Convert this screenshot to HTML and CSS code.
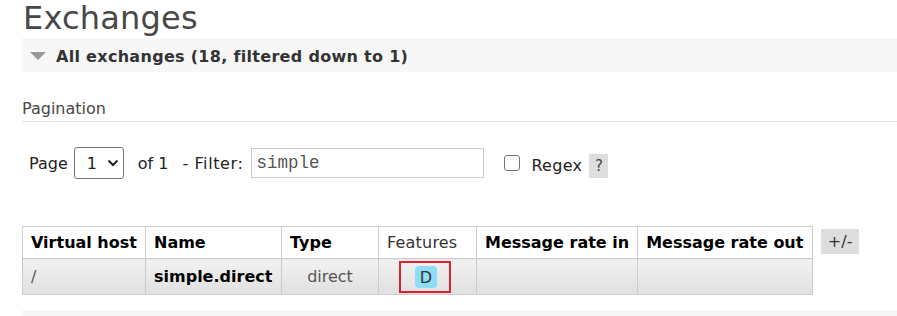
FILE: index.html
```html
<!DOCTYPE html>
<html>
<head>
<meta charset="utf-8">
<link rel="stylesheet" href="styles.css">
</head>
<body>
<div class="page">
  <h1 class="title">Exchanges</h1>
  <div class="section">
    <div class="section-head"><span class="tri"></span><span class="section-title">All exchanges (18, filtered down to 1)</span></div>
    <div class="section-body">
      <h3 class="sub">Pagination</h3>
      <div class="pager">
        <span class="lbl">Page</span>
        <span class="select"><span class="sel-val">1</span><svg class="chev" width="12" height="8" viewBox="0 0 12 8"><path d="M1.5 1.5 L6 6 L10.5 1.5" fill="none" stroke="#222" stroke-width="2"/></svg></span>
        <span class="lbl of">of 1</span>
        <span class="lbl filter">- Filter:</span>
        <span class="input">simple</span>
        <span class="check"></span>
        <span class="lbl regex">Regex</span>
        <span class="help">?</span>
      </div>
      <div class="table-wrap">
        <table class="list">
          <thead>
            <tr>
              <th class="c-vh">Virtual host</th>
              <th class="c-name">Name</th>
              <th class="c-type">Type</th>
              <th class="c-feat plain">Features</th>
              <th class="c-in">Message rate in</th>
              <th class="c-out">Message rate out</th>
            </tr>
          </thead>
          <tbody>
            <tr>
              <td class="vh">/</td>
              <td class="name">simple.direct</td>
              <td class="type">direct</td>
              <td class="feat"><span class="mark"><span class="badge">D</span></span></td>
              <td></td>
              <td></td>
            </tr>
          </tbody>
        </table>
        <span class="plusminus">+/-</span>
      </div>
    </div>
  </div>
  <div class="next-section"></div>
</div>
</body>
</html>
```

FILE: styles.css
```css
html, body {
  margin: 0;
  padding: 0;
  background: #fff;
}
body {
  font-family: "DejaVu Sans", Verdana, sans-serif;
  color: #484848;
  overflow: hidden;
}
.page {
  padding-left: 22px;
}
.title {
  margin: 0;
  font-weight: normal;
  font-size: 32px;
  line-height: 39px;
  height: 39px;
  margin-top: -1px;
  padding-left: 1px;
  color: #484848;
  letter-spacing: 0.2px;
}
.section-head {
  background: #f7f7f7;
  height: 34px;
  display: flex;
  align-items: center;
}
.tri {
  width: 0;
  height: 0;
  border-left: 8px solid transparent;
  border-right: 8px solid transparent;
  border-top: 8px solid #999;
  margin-left: 8px;
  margin-right: 10px;
  margin-top: 2px;
}
.section-title {
  font-weight: bold;
  font-size: 16px;
  letter-spacing: 0.3px;
  color: #333;
  margin-top: 2px;
}
.sub {
  margin: 27px 0 0 0;
  font-weight: normal;
  font-size: 16px;
  line-height: 20px;
  padding-bottom: 2px;
  border-bottom: 1px solid #e4e4e4;
  color: #484848;
}
.pager {
  display: flex;
  align-items: center;
  margin-top: 25px;
  padding-left: 7px;
  height: 32px;
  font-size: 16px;
  color: #222;
}
.select {
  box-sizing: border-box;
  width: 50px;
  height: 32px;
  border: 1px solid #767676;
  border-radius: 3px;
  margin-left: 6px;
  display: flex;
  align-items: center;
  padding-left: 12px;
  gap: 10px;
}
.of { margin-left: 14px; }
.filter { margin-left: 14px; letter-spacing: 0.6px; }
.input {
  box-sizing: border-box;
  margin-left: 8px;
  width: 233px;
  height: 30px;
  border: 1px solid #ccc;
  font-family: "Liberation Mono", "Courier New", monospace;
  font-size: 17.5px;
  color: #555;
  padding-left: 4px;
  display: flex;
  align-items: center;
}
.check {
  box-sizing: border-box;
  width: 16px;
  height: 16px;
  border: 1.5px solid #767676;
  border-radius: 3px;
  margin-left: 20px;
}
.regex { margin-left: 11px; margin-top: 4px; letter-spacing: 0.3px; }
.help {
  margin-left: 7px;
  background: #ddd;
  width: 19px;
  height: 24px;
  margin-top: 6px;
  display: flex;
  align-items: center;
  justify-content: center;
  font-size: 15px;
  color: #444;
}
.table-wrap {
  display: flex;
  align-items: flex-start;
  margin-top: 47px;
}
.list {
  border-collapse: collapse;
  font-size: 16px;
}
.list th {
  border: 1px solid #ccc;
  height: 31px;
  padding: 0 8px;
  text-align: left;
  font-weight: bold;
  color: #000;
  background: #fff;
  white-space: nowrap;
}
.list th.plain {
  font-weight: normal;
  color: #333;
  letter-spacing: 0.2px;
}
.list td {
  border: 1px solid #ccc;
  height: 35px;
  padding: 0 8px;
  background: linear-gradient(#f2f2f2, #e0e0e0);
  white-space: nowrap;
  color: #333;
}
.list td.name { font-weight: bold; color: #000; }
.list td.type { text-align: center; color: #555; }
.list td.vh { color: #555; }
.c-vh { width: 106px; }
.c-name { width: 119px; }
.c-type { width: 80px; }
.c-feat { width: 81px; }
.c-in { width: 142px; }
.c-out { width: 158px; }
.list td.feat { text-align: center; padding: 0; }
.mark {
  display: inline-flex;
  align-items: center;
  justify-content: center;
  box-sizing: border-box;
  width: 52px;
  height: 32px;
  border: 2px solid #e0202e;
  vertical-align: middle;
  margin-right: 6px;
}
.badge {
  display: inline-block;
  background: #8fdcf6;
  border-radius: 4px;
  width: 22px;
  height: 22px;
  line-height: 23px;
  text-align: center;
  color: #333;
  font-size: 16px;
  margin-left: 3px;
}
.plusminus {
  margin-left: 8px;
  margin-top: 3px;
  background: #ddd;
  width: 38px;
  height: 25px;
  display: flex;
  align-items: center;
  justify-content: center;
  font-size: 16px;
  color: #333;
}
.next-section {
  margin-top: 15px;
  height: 20px;
  background: #f7f7f7;
}
```
